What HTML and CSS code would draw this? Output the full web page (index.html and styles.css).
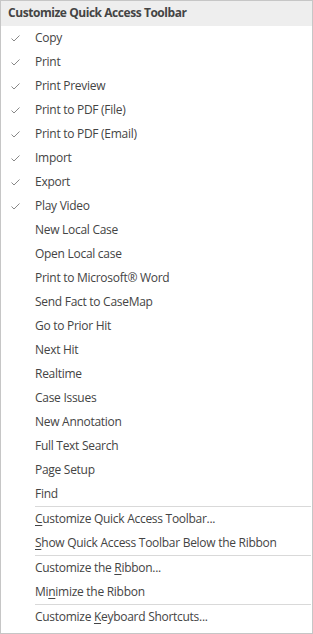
FILE: index.html
```html
<!DOCTYPE html>
<html>
<head>
<meta charset="utf-8">
<link rel="stylesheet" href="styles.css">
</head>
<body>
<div class="menu">
  <div class="header">Customize Quick Access Toolbar</div>
  <div class="group">
    <div class="item checked"><span class="check"><svg width="9" height="7" viewBox="0 0 9 7"><path d="M0.5 3.5 L3 6 L8.5 0.5" fill="none" stroke="#888" stroke-width="1"/></svg></span><span class="label">Copy</span></div>
    <div class="item checked"><span class="check"><svg width="9" height="7" viewBox="0 0 9 7"><path d="M0.5 3.5 L3 6 L8.5 0.5" fill="none" stroke="#888" stroke-width="1"/></svg></span><span class="label">Print</span></div>
    <div class="item checked"><span class="check"><svg width="9" height="7" viewBox="0 0 9 7"><path d="M0.5 3.5 L3 6 L8.5 0.5" fill="none" stroke="#888" stroke-width="1"/></svg></span><span class="label">Print Preview</span></div>
    <div class="item checked"><span class="check"><svg width="9" height="7" viewBox="0 0 9 7"><path d="M0.5 3.5 L3 6 L8.5 0.5" fill="none" stroke="#888" stroke-width="1"/></svg></span><span class="label">Print to PDF (File)</span></div>
    <div class="item checked"><span class="check"><svg width="9" height="7" viewBox="0 0 9 7"><path d="M0.5 3.5 L3 6 L8.5 0.5" fill="none" stroke="#888" stroke-width="1"/></svg></span><span class="label">Print to PDF (Email)</span></div>
    <div class="item checked"><span class="check"><svg width="9" height="7" viewBox="0 0 9 7"><path d="M0.5 3.5 L3 6 L8.5 0.5" fill="none" stroke="#888" stroke-width="1"/></svg></span><span class="label">Import</span></div>
    <div class="item checked"><span class="check"><svg width="9" height="7" viewBox="0 0 9 7"><path d="M0.5 3.5 L3 6 L8.5 0.5" fill="none" stroke="#888" stroke-width="1"/></svg></span><span class="label">Export</span></div>
    <div class="item checked"><span class="check"><svg width="9" height="7" viewBox="0 0 9 7"><path d="M0.5 3.5 L3 6 L8.5 0.5" fill="none" stroke="#888" stroke-width="1"/></svg></span><span class="label">Play Video</span></div>
    <div class="item"><span class="check"></span><span class="label">New Local Case</span></div>
    <div class="item"><span class="check"></span><span class="label">Open Local case</span></div>
    <div class="item"><span class="check"></span><span class="label">Print to Microsoft® Word</span></div>
    <div class="item"><span class="check"></span><span class="label">Send Fact to CaseMap</span></div>
    <div class="item"><span class="check"></span><span class="label">Go to Prior Hit</span></div>
    <div class="item"><span class="check"></span><span class="label">Next Hit</span></div>
    <div class="item"><span class="check"></span><span class="label">Realtime</span></div>
    <div class="item"><span class="check"></span><span class="label">Case Issues</span></div>
    <div class="item"><span class="check"></span><span class="label">New Annotation</span></div>
    <div class="item"><span class="check"></span><span class="label">Full Text Search</span></div>
    <div class="item"><span class="check"></span><span class="label">Page Setup</span></div>
    <div class="item"><span class="check"></span><span class="label">Find</span></div>
  </div>
  <div class="sep"></div>
  <div class="group">
    <div class="item"><span class="check"></span><span class="label"><u>C</u>ustomize Quick Access Toolbar...</span></div>
    <div class="item"><span class="check"></span><span class="label"><u>S</u>how Quick Access Toolbar Below the Ribbon</span></div>
  </div>
  <div class="sep"></div>
  <div class="group">
    <div class="item"><span class="check"></span><span class="label">Customize the <u>R</u>ibbon...</span></div>
    <div class="item"><span class="check"></span><span class="label">Mi<u>n</u>imize the Ribbon</span></div>
  </div>
  <div class="sep"></div>
  <div class="group">
    <div class="item"><span class="check"></span><span class="label">Customize <u>K</u>eyboard Shortcuts...</span></div>
  </div>
</div>
</body>
</html>
```

FILE: styles.css
```css
html, body {
  margin: 0;
  padding: 0;
  background: #ffffff;
}
.menu {
  width: 313px;
  height: 634px;
  box-sizing: border-box;
  border: 1px solid #c6c6c6;
  background: #ffffff;
  font-family: "Open Sans", "Noto Sans", sans-serif;
  font-size: 12px;
  letter-spacing: -0.28px;
  color: #444444;
  display: flex;
  flex-direction: column;
}
.header {
  height: 25px;
  line-height: 24px;
  background: #eeeeee;
  font-weight: bold;
  letter-spacing: -0.45px;
  padding-left: 7px;
  color: #444444;
}
.group {
  display: flex;
  flex-direction: column;
}
.item {
  height: 24px;
  display: flex;
  align-items: center;
}
.label {
  white-space: nowrap;
  line-height: 23px;
  padding-bottom: 1px;
}
.check {
  width: 34px;
  padding-left: 10px;
  box-sizing: border-box;
  display: flex;
  align-items: center;
}
.label u {
  text-decoration: underline;
  text-underline-offset: 2px;
}
.sep {
  height: 1px;
  background: #d9d9d9;
  margin-left: 34px;
  margin-right: 1px;
}
```
